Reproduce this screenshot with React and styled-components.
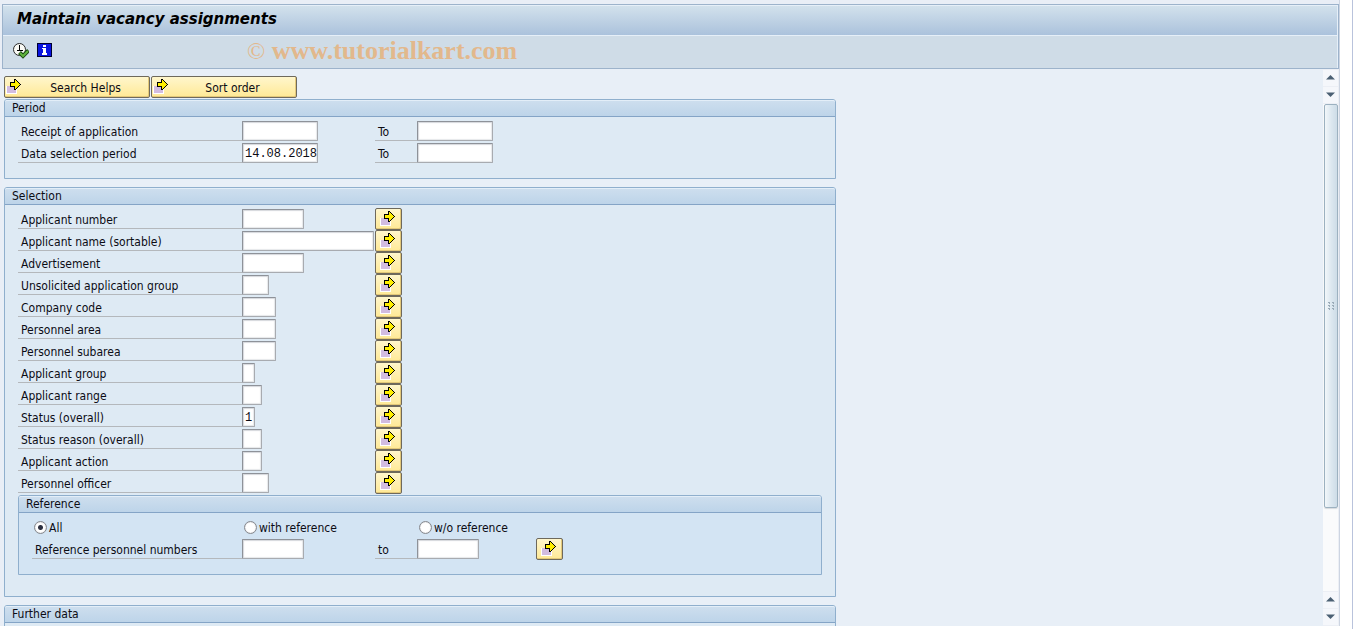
import React, { useState } from "react";
import styled, { createGlobalStyle } from "styled-components";

const GlobalStyle = createGlobalStyle`
	* {
		box-sizing: border-box;
	}
	body {
		margin: 0;
		background: #ffffff;
		color: #0c0c14;
		font-family: "DejaVu Sans Condensed", "DejaVu Sans", sans-serif;
		font-stretch: condensed;
		font-size: 12px;
	}
	button, input {
		font: inherit;
		color: inherit;
		margin: 0;
	}
`;
const Page = styled.div`
	height: 100vh;
	display: flex;
	background: #ffffff;
	padding-bottom: 3px;
	border-right: 1px solid #b9c3dc;
`;
const Window = styled.div`
	flex: 1;
	min-width: 0;
	margin-right: 12px;
	padding: 4px 0 0 2px;
	display: flex;
	flex-direction: column;
	background: #e9eef6;
	border-right: 1px solid #cdd5e2;
`;
const Header = styled.header`
	flex: none;
	border: 1px solid #9db3cb;
`;
const Title = styled.h1`
	margin: 0;
	height: 31px;
	padding: 0 14px;
	line-height: 26px;
	font-family: "DejaVu Sans", sans-serif;
	font-stretch: normal;
	font-size: 15px;
	font-weight: bold;
	font-style: italic;
	color: #000000;
	background: linear-gradient(#d2e1ec, #abc2dc);
	border: 1px solid #e6eff8;
	border-left: none;
`;
const Toolbar = styled.div`
	height: 32px;
	display: flex;
	align-items: center;
	gap: 8px;
	padding: 0 10px 2px;
	background: #cfdce7;
	border-right: 1px solid #e6eff8;
`;
const ToolButton = styled.button`
	width: 16px;
	height: 16px;
	padding: 0;
	border: none;
	background: none;
	cursor: pointer;
	svg {
		display: block;
	}
`;
const Watermark = styled.span`
	margin-left: 186px;
	font-family: "Liberation Serif", serif;
	font-size: 26px;
	line-height: 28px;
	color: #e2b88c;
	white-space: nowrap;
`;
const Copyright = styled.span`
	font-size: 24px;
`;
const Body = styled.div`
	flex: 1;
	min-height: 0;
	display: flex;
	background: #e8eff7;
`;
const Content = styled.main`
	flex: 1;
	min-width: 0;
	overflow: hidden;
	padding: 7px 2px 0;
`;
const ButtonRow = styled.div`
	display: flex;
	gap: 1px;
	margin-bottom: 1px;
`;
const YellowButton = styled.button`
	height: 22px;
	padding: 0;
	display: flex;
	align-items: center;
	border: 1px solid #6e695c;
	border-radius: 2px;
	background: linear-gradient(#fff6cc, #ffe996);
	box-shadow: inset -1px -1px 0 #e3c879;
	cursor: pointer;
	svg {
		flex: none;
		margin-bottom: 2px;
	}
`;
const TextButton = styled(YellowButton)`
	width: 146px;
	padding-left: 1px;
	span {
		flex: 1;
		padding-top: 2px;
		text-align: center;
	}
`;
const MoreButton = styled(YellowButton)`
	width: 27px;
	padding-left: 4px;
`;
const Panel = styled.section`
	max-width: 832px;
	margin: ${props => (props.$nested ? "1px 0 0" : "0 0 8px")};
	border: 1px solid #8fafcd;
	border-radius: 3px 3px 0 0;
	background: ${props => (props.$nested ? "#d3e4f3" : "#deeaf4")};
`;
const PanelTitle = styled.h2`
	margin: 0;
	height: 17px;
	padding-left: 7px;
	line-height: 14px;
	font-size: 12px;
	font-weight: normal;
	background: linear-gradient(#cddeee, #bdd4e9);
	border-top: 1px solid #e3eef8;
	border-bottom: 1px solid #84a4c6;
	border-radius: 2px 2px 0 0;
`;
const PanelBody = styled.div`
	padding: 3px 13px ${props => props.$bottom || "14px"};
`;
const Row = styled.div`
	height: 22px;
	display: grid;
	grid-template-columns: ${props => (props.$nested ? "210px" : "224px")} 133px 42px 119px auto;
	align-items: center;
	justify-content: start;
`;
const Label = styled.label`
	height: 20px;
	padding: 1px 3px 0;
	line-height: 21px;
	border-bottom: 1px solid #b4b8bc;
	white-space: nowrap;
`;
const Input = styled.input`
	width: ${props => props.$width}px;
	height: 20px;
	padding: 1px 0 0 2px;
	font-family: "Liberation Mono", monospace;
	font-stretch: normal;
	font-size: 12px;
	border: 1px solid #a8abb0;
	border-top-color: #8e9299;
	border-left-color: #8e9299;
	border-radius: 1px;
	background: #ffffff;
	box-shadow: inset 1px 1px 1px #d5d8dc, inset -1px -1px 1px #e6e8ea;
	outline: none;
`;
const RadioLabel = styled.label`
	display: flex;
	align-items: center;
	gap: 2px;
	padding: 1px 0 0 2px;
	white-space: nowrap;
	/* the third choice lines up with the upper-limit field */
	&:last-child {
		grid-column: 4;
	}
`;
const Radio = styled.input`
	appearance: none;
	flex: none;
	width: 13px;
	height: 13px;
	border: 1px solid #85888e;
	border-radius: 50%;
	background: #ffffff;
	box-shadow: inset 0 0 1px #a0a4aa;
	&:checked {
		background: radial-gradient(circle, #2c3040 2px, #ffffff 3px);
	}
`;
const ScrollBar = styled.div`
	flex: none;
	width: 16px;
	padding: 1px 1px 1px 0;
	display: flex;
	flex-direction: column;
	gap: 1px;
	background: #eceff5;
`;
const ScrollButton = styled.button`
	flex: none;
	height: 16px;
	padding: 0 1px 2px 0;
	display: flex;
	align-items: center;
	justify-content: center;
	border: none;
	background: #f5f7fb;
`;
const Track = styled.div`
	flex: 1;
	padding-left: 1px;
	background: #fafbfc;
`;
const Thumb = styled.div`
	height: 83%;
	display: flex;
	align-items: center;
	justify-content: center;
	border: 1px solid #9cb1c0;
	border-radius: 2px;
	background: linear-gradient(to right, #f2f7fa, #dde8f0 50%, #cddce7);
	box-shadow: 0 1px 1px #d6dade;
`;

function ArrowIcon() {
	return (
		<svg width="16" height="16" viewBox="0 0 16 16" shapeRendering="crispEdges" aria-hidden="true">
			<rect x="0" y="8" width="11" height="8" fill="#ffffff" />
			<rect x="1" y="8" width="9" height="7" fill="#d2bce0" />
			<path
				d="M4.5 4.5H8.5V1.5H9.5L14.5 6.5L9.5 11.5H8.5V8.5H4.5Z"
				fill="#ffee00"
				stroke="#000000"
			/>
		</svg>
	);
}

function ExecuteIcon() {
	return (
		<svg width="16" height="16" viewBox="0 0 16 16" aria-hidden="true">
			<circle cx="6.5" cy="6.5" r="6" fill="#fafaf5" stroke="#2b2b2b" />
			<path d="M6.5 2V7.5M4 7.5H10" fill="none" stroke="#000000" />
			<path d="M6.5 9.5L10 13L15.5 7.5" fill="none" stroke="#1c4a12" strokeWidth="4" />
			<path d="M7 10L10 13L15 8" fill="none" stroke="#62b540" strokeWidth="2" />
		</svg>
	);
}

function InfoIcon() {
	return (
		<svg width="16" height="16" viewBox="0 0 16 16" shapeRendering="crispEdges" aria-hidden="true">
			<rect x="0" y="0" width="15" height="14" fill="#000030" />
			<rect x="1" y="1" width="13" height="12" fill="#0a14e0" />
			<path d="M6 2H9V4H6ZM5 5H9V10H10V12H5V10H6V6H5Z" fill="#ffffff" />
		</svg>
	);
}

function Triangle({ down }) {
	return (
		<svg width="9" height="5" viewBox="0 0 9 5" aria-hidden="true">
			<path d={down ? "M0 0.5H9L4.5 5Z" : "M0 4.5H9L4.5 0Z"} fill="#4b6073" />
		</svg>
	);
}

function Grip() {
	return (
		<svg width="7" height="8" viewBox="0 0 7 8" shapeRendering="crispEdges" aria-hidden="true">
			{[0, 3, 6].map(y => (
				<path key={y} d={`M0 ${y}H2V${y + 2}H1V${y + 1}H0ZM4 ${y}H6V${y + 2}H5V${y + 1}H4Z`} fill="#9aabb8" />
			))}
		</svg>
	);
}

const periodRows = [
	{ id: "receipt", label: "Receipt of application", from: "" },
	{ id: "period", label: "Data selection period", from: "14.08.2018" },
];

// width is the field width in pixels
const selectionRows = [
	{ id: "number", label: "Applicant number", width: 62 },
	{ id: "name", label: "Applicant name (sortable)", width: 132 },
	{ id: "advert", label: "Advertisement", width: 62 },
	{ id: "unsolicited", label: "Unsolicited application group", width: 27 },
	{ id: "company", label: "Company code", width: 34 },
	{ id: "area", label: "Personnel area", width: 34 },
	{ id: "subarea", label: "Personnel subarea", width: 34 },
	{ id: "group", label: "Applicant group", width: 13 },
	{ id: "range", label: "Applicant range", width: 20 },
	{ id: "status", label: "Status (overall)", width: 13, value: "1" },
	{ id: "reason", label: "Status reason (overall)", width: 20 },
	{ id: "action", label: "Applicant action", width: 20 },
	{ id: "officer", label: "Personnel officer", width: 27 },
];

const references = ["All", "with reference", "w/o reference"];

function App() {

	const [reference, setReference] = useState("All");

	return (
		<Page>
			<GlobalStyle />
			<Window>
				<Header>
					<Title>Maintain vacancy assignments</Title>
					<Toolbar>
						<ToolButton type="button" aria-label="Execute"><ExecuteIcon /></ToolButton>
						<ToolButton type="button" aria-label="Information"><InfoIcon /></ToolButton>
						<Watermark><Copyright>©</Copyright> <b>www.tutorialkart.com</b></Watermark>
					</Toolbar>
				</Header>
				<Body>
					<Content>
						<ButtonRow>
							<TextButton type="button"><ArrowIcon /><span>Search Helps</span></TextButton>
							<TextButton type="button"><ArrowIcon /><span>Sort order</span></TextButton>
						</ButtonRow>
						<Panel>
							<PanelTitle>Period</PanelTitle>
							<PanelBody>
								{periodRows.map(row => (
									<Row key={row.id}>
										<Label htmlFor={row.id}>{row.label}</Label>
										<Input id={row.id} $width={76} defaultValue={row.from} />
										<Label htmlFor={`${row.id}-to`}>To</Label>
										<Input id={`${row.id}-to`} $width={76} />
									</Row>
								))}
							</PanelBody>
						</Panel>
						<Panel>
							<PanelTitle>Selection</PanelTitle>
							<PanelBody $bottom="21px">
								{selectionRows.map(row => (
									<Row key={row.id}>
										<Label htmlFor={row.id}>{row.label}</Label>
										<Input id={row.id} $width={row.width} defaultValue={row.value} />
										<MoreButton type="button" aria-label={`Multiple selection: ${row.label}`}>
											<ArrowIcon />
										</MoreButton>
									</Row>
								))}
								<Panel $nested>
									<PanelTitle>Reference</PanelTitle>
									<PanelBody>
										<Row $nested>
											{references.map(name => (
												<RadioLabel key={name}>
													<Radio
														type="radio"
														name="reference"
														checked={reference === name}
														onChange={() => setReference(name)}
													/>
													{name}
												</RadioLabel>
											))}
										</Row>
										<Row $nested>
											<Label htmlFor="ref-from">Reference personnel numbers</Label>
											<Input id="ref-from" $width={62} />
											<Label htmlFor="ref-to">to</Label>
											<Input id="ref-to" $width={62} />
											<MoreButton type="button" aria-label="Multiple selection: Reference personnel numbers">
												<ArrowIcon />
											</MoreButton>
										</Row>
									</PanelBody>
								</Panel>
							</PanelBody>
						</Panel>
						<Panel>
							<PanelTitle>Further data</PanelTitle>
							<PanelBody />
						</Panel>
					</Content>
					<ScrollBar>
						<ScrollButton type="button" aria-label="Scroll up"><Triangle /></ScrollButton>
						<ScrollButton type="button" aria-label="Scroll down"><Triangle down /></ScrollButton>
						<Track>
							<Thumb><Grip /></Thumb>
						</Track>
						<ScrollButton type="button" aria-label="Page up"><Triangle /></ScrollButton>
						<ScrollButton type="button" aria-label="Page down"><Triangle down /></ScrollButton>
					</ScrollBar>
				</Body>
			</Window>
		</Page>
	);
}

export default App;
